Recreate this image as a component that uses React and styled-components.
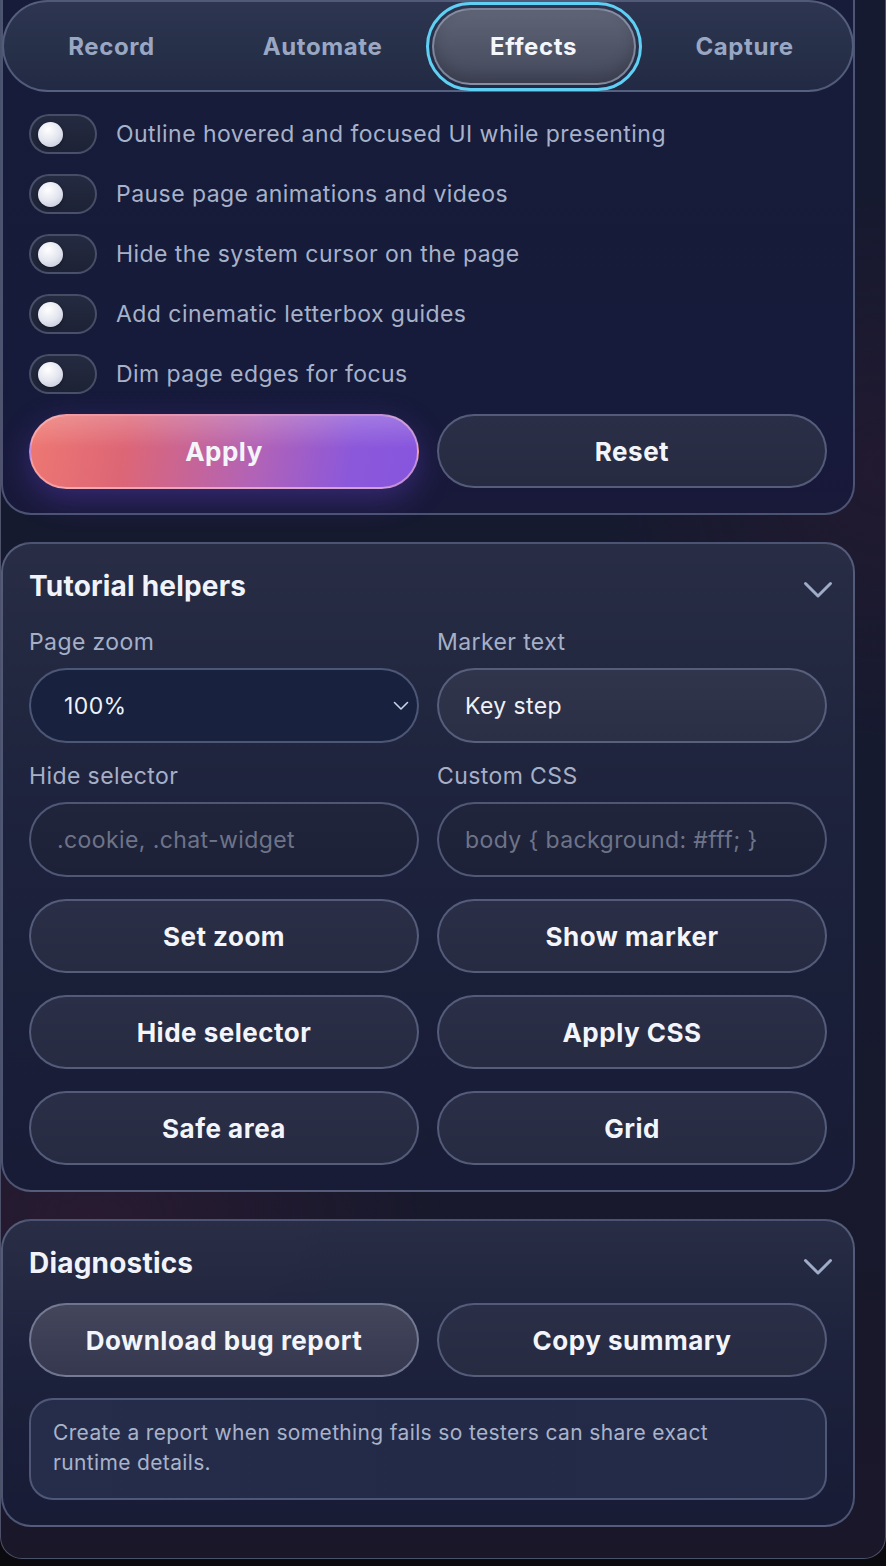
import React from 'react'
import styled, { createGlobalStyle } from 'styled-components'

const GlobalStyle = createGlobalStyle`
  * { box-sizing: border-box; }
  html, body {
    margin: 0;
    padding: 0;
    background: #0b0b0f;
    font-family: Inter, "Noto Sans", sans-serif;
  }
`

const tabs = ['Record', 'Automate', 'Effects', 'Capture']
const toggles = [
  'Outline hovered and focused UI while presenting',
  'Pause page animations and videos',
  'Hide the system cursor on the page',
  'Add cinematic letterbox guides',
  'Dim page edges for focus',
]
const helperButtons = ['Set zoom', 'Show marker', 'Hide selector', 'Apply CSS', 'Safe area', 'Grid']

const Chevron = ({ small }) =>
  small ? (
    <svg width="16" height="10" viewBox="0 0 16 10" fill="none">
      <path d="M1.5 1.5 L8 8 L14.5 1.5" stroke="#c9d2e6" strokeWidth="1.6" strokeLinecap="round" strokeLinejoin="round" />
    </svg>
  ) : (
    <svg width="30" height="20" viewBox="0 0 30 20" fill="none">
      <path d="M2.5 3.5 L15 16 L27.5 3.5" stroke="#9eacc8" strokeWidth="3" strokeLinecap="round" strokeLinejoin="round" />
    </svg>
  )

const App = () => {
  return (
    <>
      <GlobalStyle />
      <Panel>
        <EffectsCard>
          <TabBar>
            {tabs.map((t) => (
              <Tab key={t}>
                <TabPill $active={t === 'Effects'}>{t}</TabPill>
              </Tab>
            ))}
          </TabBar>
          <ToggleList>
            {toggles.map((t) => (
              <ToggleRow key={t}>
                <Track>
                  <Knob />
                </Track>
                <ToggleLabel>{t}</ToggleLabel>
              </ToggleRow>
            ))}
          </ToggleList>
          <Pair>
            <Button $variant="primary">Apply</Button>
            <Button>Reset</Button>
          </Pair>
        </EffectsCard>

        <Card>
          <CardHeader>
            <CardTitle>Tutorial helpers</CardTitle>
            <Chevron />
          </CardHeader>
          <FieldGrid>
            <Field>
              <Label>Page zoom</Label>
              <Select>
                <span>100%</span>
                <Chevron small />
              </Select>
            </Field>
            <Field>
              <Label>Marker text</Label>
              <Input $filled>Key step</Input>
            </Field>
            <Field>
              <Label>Hide selector</Label>
              <Input>.cookie, .chat-widget</Input>
            </Field>
            <Field>
              <Label>Custom CSS</Label>
              <Input>body {'{'} background: #fff; {'}'}</Input>
            </Field>
          </FieldGrid>
          <ButtonGrid>
            {helperButtons.map((b) => (
              <Button key={b}>{b}</Button>
            ))}
          </ButtonGrid>
        </Card>

        <Card>
          <CardHeader>
            <CardTitle>Diagnostics</CardTitle>
            <Chevron />
          </CardHeader>
          <Pair $tight>
            <Button $variant="soft">Download bug report</Button>
            <Button>Copy summary</Button>
          </Pair>
          <Note>Create a report when something fails so testers can share exact runtime details.</Note>
        </Card>
      </Panel>
    </>
  )
}

const Panel = styled.div`
  width: 886px;
  padding: 0 30px 31px 0;
  display: flex;
  flex-direction: column;
  gap: 27px;
  border: 1px solid rgba(140, 150, 180, 0.45);
  border-top: none;
  border-radius: 0 0 22px 22px;
  background:
    radial-gradient(ellipse 500px 300px at 10% 78%, rgba(70, 30, 60, 0.35), transparent 70%),
    radial-gradient(ellipse 400px 400px at 100% 30%, rgba(60, 25, 50, 0.3), transparent 70%),
    linear-gradient(180deg, #151a30 0%, #161a2e 60%, #1a1729 100%);
`

const Card = styled.section`
  width: 854px;
  padding: 24px 26px 25px;
  border: 2px solid rgba(120, 132, 165, 0.55);
  border-radius: 30px;
  background:
    linear-gradient(180deg, rgba(42, 48, 72, 0.9) 0%, rgba(30, 35, 62, 0.9) 45%, rgba(24, 28, 54, 0.95) 100%);
`

const EffectsCard = styled(Card)`
  padding: 0 26px 24px;
  border-top: none;
  border-radius: 0 0 30px 30px;
  background: linear-gradient(180deg, #171c3a 0%, #161b3b 70%, #19193a 100%);
`

const TabBar = styled.div`
  height: 92px;
  margin: 0 -27px 0 -27px;
  padding: 0 2px;
  display: grid;
  grid-template-columns: repeat(4, 1fr);
  align-items: center;
  border: 2px solid rgba(120, 132, 165, 0.55);
  border-radius: 46px;
  background: linear-gradient(180deg, #2d3550 0%, #273049 55%, #222944 100%);
`

const Tab = styled.div`
  display: flex;
  justify-content: center;
`

const TabPill = styled.div`
  width: 204px;
  height: 77px;
  display: flex;
  align-items: center;
  justify-content: center;
  border-radius: 39px;
  font-size: 24px;
  font-weight: 700;
  letter-spacing: 0.6px;
  color: ${(p) => (p.$active ? '#f4f6fb' : '#9aa7c2')};
  ${(p) =>
    p.$active &&
    `
    background: linear-gradient(180deg, #5f6477 0%, #4f5467 55%, #454a5e 100%);
    border: 2px solid rgba(170, 178, 200, 0.55);
    outline: 3px solid #5fd0f4;
    outline-offset: 3px;
    box-shadow: inset 0 -8px 14px rgba(0,0,0,0.18);
  `}
`

const ToggleList = styled.div`
  margin-top: 22px;
  display: flex;
  flex-direction: column;
  gap: 20px;
`

const ToggleRow = styled.div`
  display: flex;
  align-items: center;
  gap: 19px;
`

const Track = styled.div`
  width: 68px;
  height: 40px;
  flex: 0 0 68px;
  display: flex;
  align-items: center;
  padding-left: 7px;
  border-radius: 20px;
  border: 2px solid rgba(130, 140, 170, 0.4);
  background: linear-gradient(180deg, #242a40 0%, #1d2236 100%);
`

const Knob = styled.div`
  width: 25px;
  height: 25px;
  border-radius: 50%;
  background: radial-gradient(circle at 40% 30%, #ffffff 0%, #e4e6f0 50%, #b9bdd2 100%);
  box-shadow: 0 1px 3px rgba(0, 0, 0, 0.4);
`

const ToggleLabel = styled.span`
  font-size: 23px;
  color: #a7b2c9;
  letter-spacing: 0.45px;
`

const Pair = styled.div`
  margin-top: ${(p) => (p.$tight ? '22px' : '20px')};
  display: grid;
  grid-template-columns: 1fr 1fr;
  gap: 18px;
`

const Button = styled.button`
  height: ${(p) => (p.$variant === 'primary' ? '75px' : '74px')};
  border-radius: 38px;
  font-family: Inter, "Noto Sans", sans-serif;
  font-size: 26px;
  font-weight: 700;
  letter-spacing: 0.5px;
  color: #f3f5fb;
  cursor: pointer;
  border: 2px solid rgba(120, 132, 165, 0.55);
  background: linear-gradient(180deg, #2a2f47 0%, #262b42 100%);
  ${(p) =>
    p.$variant === 'primary' &&
    `
    border: 2px solid rgba(255, 200, 210, 0.5);
    background:
      linear-gradient(180deg, rgba(255,255,255,0.2) 0%, rgba(255,255,255,0) 45%),
      linear-gradient(100deg, #ee7872 0%, #dd6676 25%, #b263b6 58%, #8c58da 82%, #8655de 100%);
    box-shadow: 0 10px 30px rgba(110, 70, 220, 0.35);
  `}
  ${(p) =>
    p.$variant === 'soft' &&
    `
    border-color: rgba(150, 158, 185, 0.6);
    background: linear-gradient(180deg, #44475c 0%, #3a3d53 60%, #35384e 100%);
  `}
`

const CardHeader = styled.div`
  height: 36px;
  display: flex;
  align-items: center;
  justify-content: space-between;
  margin-right: -6px;

  svg {
    margin-top: 8px;
  }
`

const CardTitle = styled.h2`
  margin: 0;
  font-size: 28px;
  font-weight: 700;
  letter-spacing: 0.2px;
  color: #f1f3fa;
`

const FieldGrid = styled.div`
  margin-top: 24px;
  display: grid;
  grid-template-columns: 1fr 1fr;
  column-gap: 18px;
  row-gap: 19px;
`

const Field = styled.div`
  display: flex;
  flex-direction: column;
  gap: 12px;
`

const Label = styled.div`
  height: 28px;
  line-height: 28px;
  font-size: 23px;
  color: #a5b0c8;
  letter-spacing: 0.4px;
`

const Select = styled.div`
  height: 75px;
  display: flex;
  align-items: center;
  justify-content: space-between;
  padding: 0 8px 0 33px;
  border-radius: 38px;
  border: 2px solid rgba(120, 132, 165, 0.55);
  background: #18213d;
  font-size: 23px;
  color: #eef1f8;
  letter-spacing: 0.4px;
`

const Input = styled.div`
  height: 75px;
  display: flex;
  align-items: center;
  padding: 0 26px;
  border-radius: 38px;
  border: 2px solid rgba(120, 132, 165, 0.55);
  font-size: 23px;
  letter-spacing: 0.4px;
  color: ${(p) => (p.$filled ? '#eef1f8' : '#6e7488')};
  background: ${(p) =>
    p.$filled
      ? 'linear-gradient(180deg, #30354c 0%, #2a2f45 100%)'
      : 'linear-gradient(180deg, #20253c 0%, #1c2138 100%)'};
`

const ButtonGrid = styled.div`
  margin-top: 22px;
  display: grid;
  grid-template-columns: 1fr 1fr;
  column-gap: 18px;
  row-gap: 22px;
`

const Note = styled.p`
  margin: 21px 0 0;
  padding: 18px 90px 20px 22px;
  min-height: 99px;
  border-radius: 24px;
  border: 2px solid rgba(120, 132, 165, 0.5);
  background: linear-gradient(90deg, #262d4a 0%, #222a48 50%, #242b47 100%);
  font-size: 21px;
  line-height: 30px;
  color: #a9b3ca;
  letter-spacing: 0.35px;
`

export default App
